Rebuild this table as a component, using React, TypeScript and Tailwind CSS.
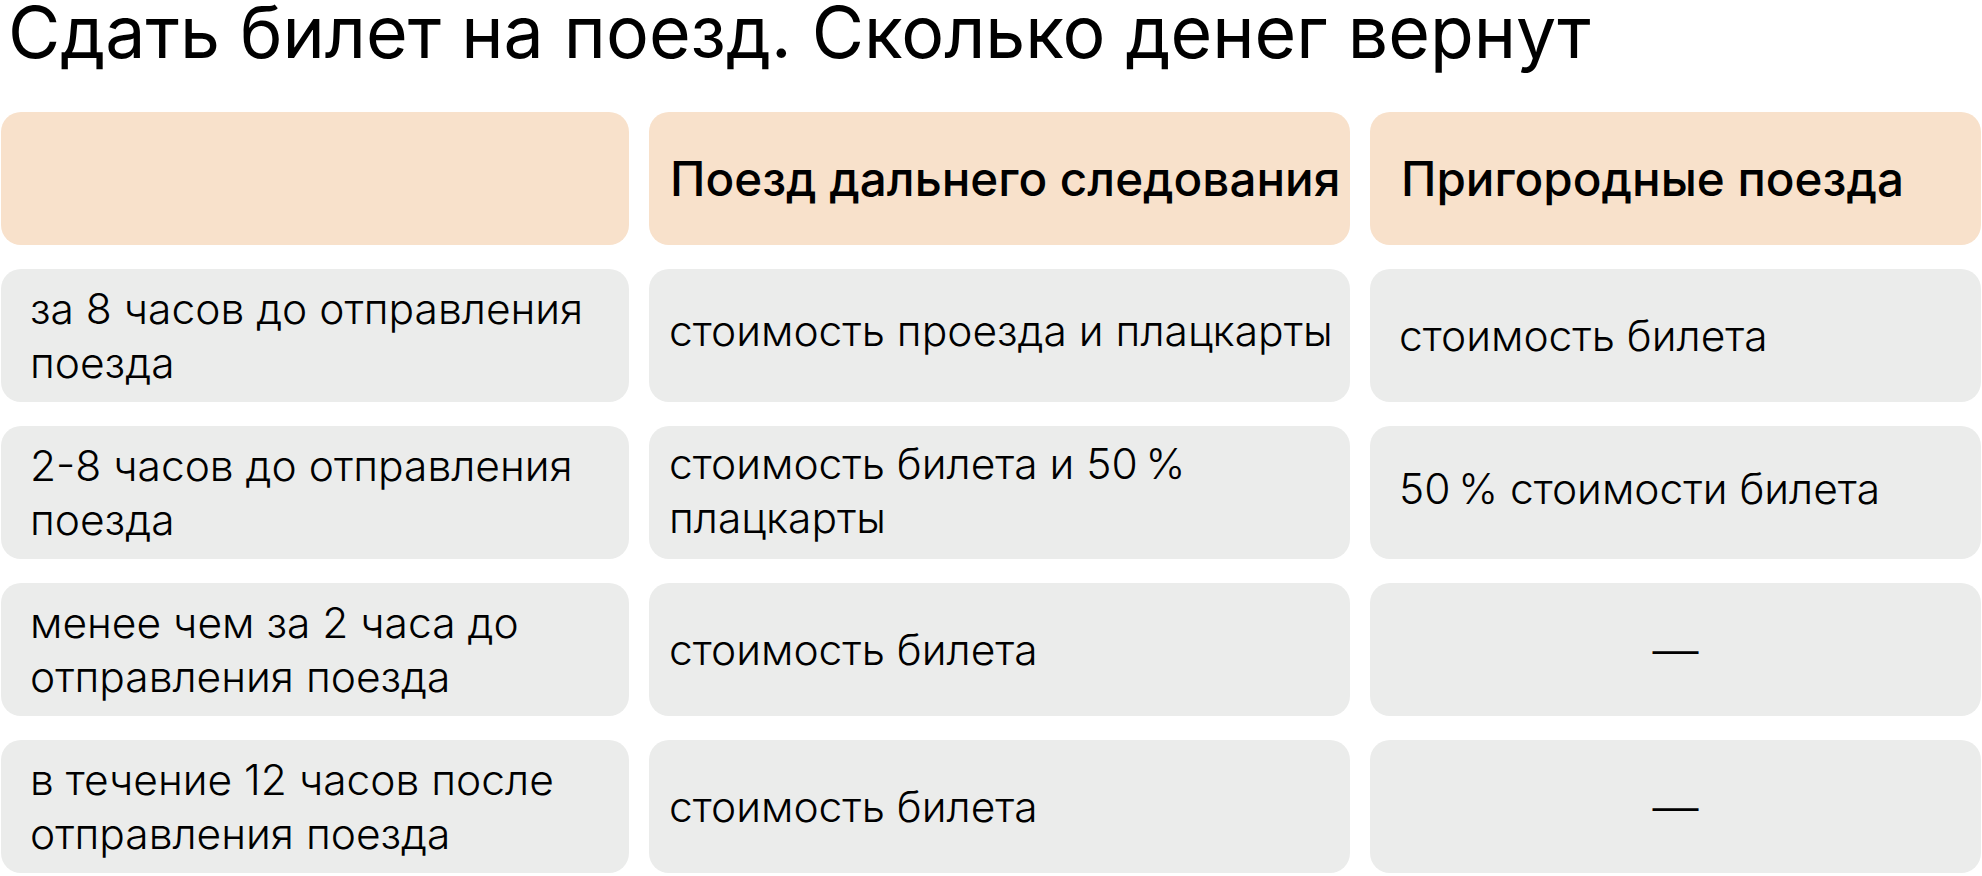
import React from "react";

type Row = {
  when: string;
  longDistance: string;
  suburban: string;
  midShift: string;
  rightShift: string;
};

const rows: Row[] = [
  {
    when: "за 8 часов до отправления поезда",
    longDistance: "стоимость проезда и плацкарты",
    suburban: "стоимость билета",
    midShift: "pb-[10px]",
    rightShift: "pb-0",
  },
  {
    when: "2-8 часов до отправления поезда",
    longDistance: "стоимость билета и 50\u202F% плацкарты",
    suburban: "50\u202F% стоимости билета",
    midShift: "pb-[4px]",
    rightShift: "pb-[8px]",
  },
  {
    when: "менее чем за 2 часа до отправления поезда",
    longDistance: "стоимость билета",
    suburban: "—",
    midShift: "pb-0",
    rightShift: "pb-0",
  },
  {
    when: "в течение 12 часов после отправления поезда",
    longDistance: "стоимость билета",
    suburban: "—",
    midShift: "pb-0",
    rightShift: "pb-0",
  },
];

const font = { fontFamily: "Inter, 'Noto Sans', sans-serif" };

export default function App() {
  return (
    <div className="w-[1982px] h-[876px] bg-white text-black overflow-hidden" style={font}>
      <div className="h-[112px] pl-[8px] flex items-start">
        <h1 className="text-[71.6px] leading-[64px] font-normal">
          Сдать билет на поезд. Сколько денег вернут
        </h1>
      </div>

      <div className="grid grid-cols-[628px_701px_611px] auto-rows-[133px] gap-x-[20px] gap-y-[24px] pl-[1px]">
        {/* header */}
        <div className="bg-[#f8e1cb] rounded-[20px]" />
        <div className="bg-[#f8e1cb] rounded-[20px] flex items-center pl-[21px] text-[47.6px] font-medium leading-[55px]">
          Поезд дальнего следования
        </div>
        <div className="bg-[#f8e1cb] rounded-[20px] flex items-center pl-[31px] text-[47.6px] font-medium leading-[55px]">
          Пригородные поезда
        </div>

        {rows.map((r) => (
          <React.Fragment key={r.when}>
            <div className="bg-[#ebeceb] rounded-[20px] flex items-center pl-[29px] pr-[20px] text-[42.5px] font-light leading-[54px]">
              {r.when}
            </div>
            <div className={`bg-[#ebeceb] rounded-[20px] flex items-center pl-[20px] pr-[10px] text-[42.5px] font-light leading-[54px] ${r.midShift}`}>
              {r.longDistance}
            </div>
            {r.suburban === "—" ? (
              <div className="bg-[#ebeceb] rounded-[20px] flex items-center justify-center text-[46px] font-light leading-[54px]">
                —
              </div>
            ) : (
              <div className={`bg-[#ebeceb] rounded-[20px] flex items-center pl-[29px] text-[42.5px] font-light leading-[54px] ${r.rightShift}`}>
                {r.suburban}
              </div>
            )}
          </React.Fragment>
        ))}
      </div>
    </div>
  );
}
